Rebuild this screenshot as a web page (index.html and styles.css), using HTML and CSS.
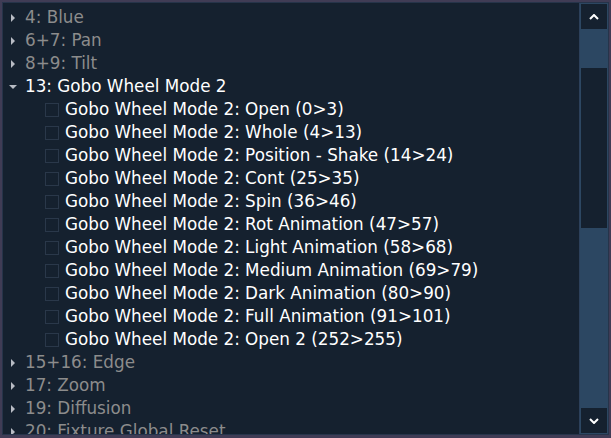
FILE: index.html
```html
<!DOCTYPE html>
<html>
<head>
<meta charset="utf-8">
<link rel="stylesheet" href="styles.css">
</head>
<body>
<div class="frame">
  <div class="tree">
    <div class="rows">
      <div class="row parent"><span class="arrow closed"></span><span class="label dim">4: Blue</span></div>
      <div class="row parent"><span class="arrow closed"></span><span class="label dim">6+7: Pan</span></div>
      <div class="row parent"><span class="arrow closed"></span><span class="label dim">8+9: Tilt</span></div>
      <div class="row parent"><span class="arrow open"></span><span class="label">13: Gobo Wheel Mode 2</span></div>
      <div class="row child"><span class="check"></span><span class="label">Gobo Wheel Mode 2: Open (0&gt;3)</span></div>
      <div class="row child"><span class="check"></span><span class="label">Gobo Wheel Mode 2: Whole (4&gt;13)</span></div>
      <div class="row child"><span class="check"></span><span class="label">Gobo Wheel Mode 2: Position - Shake (14&gt;24)</span></div>
      <div class="row child"><span class="check"></span><span class="label">Gobo Wheel Mode 2: Cont (25&gt;35)</span></div>
      <div class="row child"><span class="check"></span><span class="label">Gobo Wheel Mode 2: Spin (36&gt;46)</span></div>
      <div class="row child"><span class="check"></span><span class="label">Gobo Wheel Mode 2: Rot Animation (47&gt;57)</span></div>
      <div class="row child"><span class="check"></span><span class="label">Gobo Wheel Mode 2: Light Animation (58&gt;68)</span></div>
      <div class="row child"><span class="check"></span><span class="label">Gobo Wheel Mode 2: Medium Animation (69&gt;79)</span></div>
      <div class="row child"><span class="check"></span><span class="label">Gobo Wheel Mode 2: Dark Animation (80&gt;90)</span></div>
      <div class="row child"><span class="check"></span><span class="label">Gobo Wheel Mode 2: Full Animation (91&gt;101)</span></div>
      <div class="row child"><span class="check"></span><span class="label">Gobo Wheel Mode 2: Open 2 (252&gt;255)</span></div>
      <div class="row parent"><span class="arrow closed"></span><span class="label dim">15+16: Edge</span></div>
      <div class="row parent"><span class="arrow closed"></span><span class="label dim">17: Zoom</span></div>
      <div class="row parent"><span class="arrow closed"></span><span class="label dim">19: Diffusion</span></div>
      <div class="row parent"><span class="arrow closed"></span><span class="label dim">20: Fixture Global Reset</span></div>
    </div>
    <div class="scrollbar">
      <div class="sbtn">
        <svg width="10" height="6" viewBox="0 0 10 6"><path d="M1 5 L5 1 L9 5" fill="none" stroke="#ffffff" stroke-width="2"/></svg>
      </div>
      <div class="track">
        <div class="page top"></div>
        <div class="thumb"></div>
        <div class="page bottom"></div>
      </div>
      <div class="sbtn">
        <svg width="10" height="6" viewBox="0 0 10 6"><path d="M1 1 L5 5 L9 1" fill="none" stroke="#ffffff" stroke-width="2"/></svg>
      </div>
    </div>
  </div>
</div>
</body>
</html>
```

FILE: styles.css
```css
html, body {
  margin: 0;
  padding: 0;
  background: #403c55;
}
body {
  width: 611px;
  height: 438px;
  overflow: hidden;
}
.frame {
  box-sizing: border-box;
  width: 611px;
  height: 438px;
  padding: 2px 2px 3px 2px;
}
.tree {
  box-sizing: border-box;
  height: 433px;
  border: 1px solid #26344a;
  background: #15212f;
  display: flex;
  overflow: hidden;
}
.rows {
  flex: 1;
  padding-top: 3px;
  overflow: hidden;
}
.row {
  height: 23px;
  display: flex;
  align-items: center;
  font-family: "DejaVu Sans", sans-serif;
  font-size: 16.8px;
  color: #ffffff;
  white-space: nowrap;
}
.parent {
  padding-left: 5px;
}
.arrow {
  width: 17px;
  height: 10px;
  flex: none;
  position: relative;
}
.arrow.closed::before {
  content: "";
  position: absolute;
  left: 3px;
  top: 1px;
  border-left: 4px solid #b8bcc4;
  border-top: 4px solid transparent;
  border-bottom: 4px solid transparent;
}
.arrow.open::before {
  content: "";
  position: absolute;
  left: 1px;
  top: 3px;
  border-top: 4px solid #b8bcc4;
  border-left: 4px solid transparent;
  border-right: 4px solid transparent;
}
.label {
  line-height: 23px;
}
.dim {
  color: #8c8c8c;
}
.child {
  padding-left: 42px;
}
.check {
  box-sizing: border-box;
  width: 14px;
  height: 14px;
  border: 1px solid #2a384a;
  flex: none;
  margin-right: 6px;
}
.scrollbar {
  flex: none;
  width: 28px;
  border-left: 1px solid #2c405a;
  display: flex;
  flex-direction: column;
  background: #2c4762;
}
.sbtn {
  height: 25px;
  background: #15212f;
  border: 1px solid #2c4762;
  display: flex;
  align-items: center;
  justify-content: center;
  flex: none;
}
.track {
  flex: 1;
  display: flex;
  flex-direction: column;
}
.page.top {
  height: 38px;
  background: #2c4762;
}
.thumb {
  height: 160px;
  background: #15212f;
  border-left: 1px solid #2c4762;
  border-right: 1px solid #2c4762;
}
.page.bottom {
  flex: 1;
  background: #2c4762;
}
```
